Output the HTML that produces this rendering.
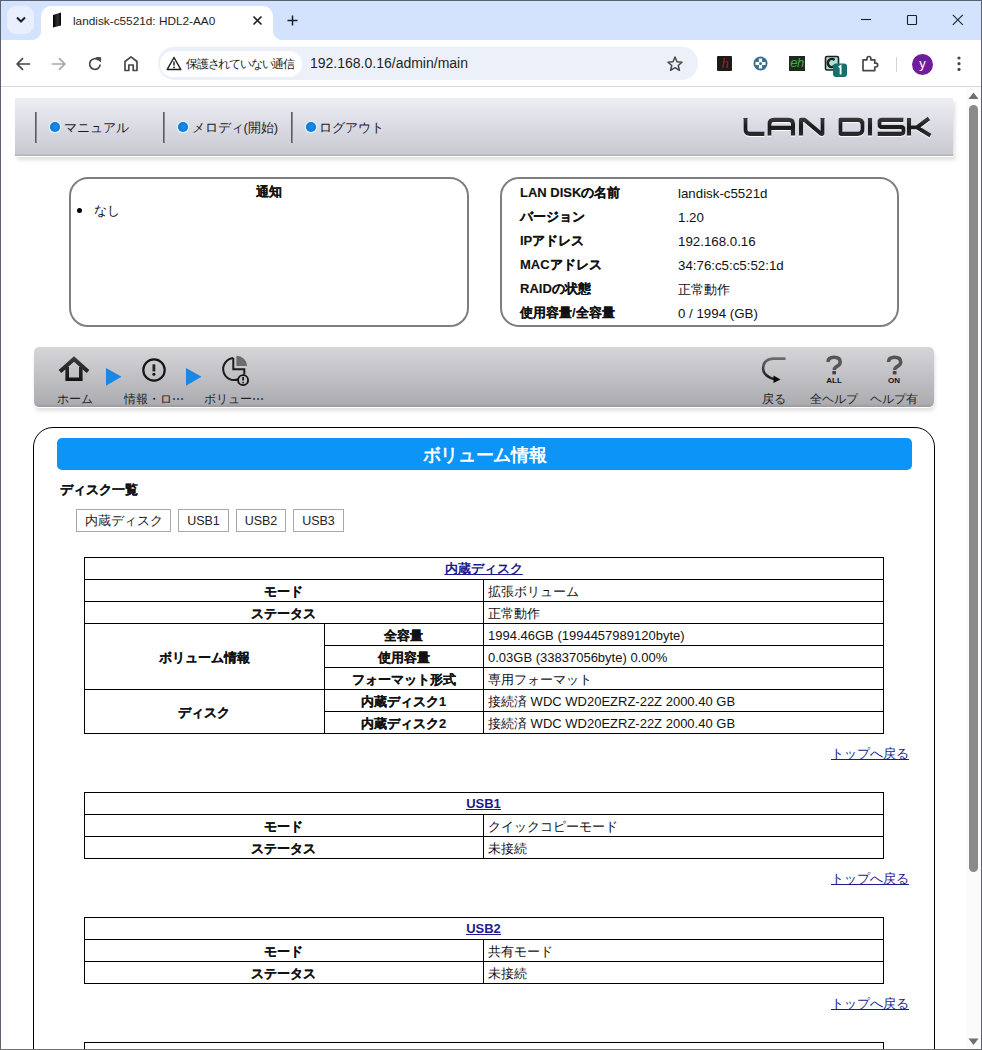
<!DOCTYPE html>
<html><head><meta charset="utf-8">
<style>
*{margin:0;padding:0;box-sizing:border-box}
html,body{width:982px;height:1050px;overflow:hidden;background:#fff;font-family:"Liberation Sans",sans-serif;color:#1f1f1f}
.a{position:absolute}
#win{position:absolute;left:0;top:0;width:982px;height:1050px;overflow:hidden}
.bd{position:absolute;background:#5b6170;z-index:100}
#tabs{position:absolute;left:0;top:0;width:982px;height:40px;background:#d3e3fd}
#toolbar{position:absolute;left:0;top:40px;width:982px;height:47px;background:#fff;border-bottom:1px solid #d9d9d9}
#page{position:absolute;left:0;top:0;width:982px;height:1050px;background:#fff;overflow:hidden;z-index:0}
#tabs,#toolbar{z-index:2}
.t13{font-size:13px;line-height:16px}
.sep{width:2px;height:31px;background:linear-gradient(90deg,#5c5c60 0,#5c5c60 50%,#8c8c90 50%)}
.dot{width:10px;height:10px;border-radius:50%;background:radial-gradient(circle at 55% 50%,#1a8ff0 0,#0a78d2 70%);box-shadow:0 0 0 1.5px #d2f3ff}
.hl{font-size:13px;line-height:16px;color:#1c1c1c;white-space:nowrap;letter-spacing:-0.1px}
.box{border:2px solid #7f7f7f;border-radius:19px}
.bold{-webkit-text-stroke:0.12px #111;font-size:13px;line-height:16px;font-weight:bold;color:#111;white-space:nowrap}
.t13{white-space:nowrap;color:#111}
.btn{height:23px;border:1px solid #a9a9a9;font-size:12.5px;line-height:22px;text-align:center;color:#222;white-space:nowrap}
.hl1{height:1px;background:#000}
.vl1{width:1px;background:#000}
.tb{-webkit-text-stroke:0.12px #111;font-size:13px;line-height:16px;font-weight:bold;text-align:center;color:#111;white-space:nowrap}
.tv{font-size:13px;line-height:16px;color:#111;white-space:nowrap}
.lk{font-size:13px;line-height:16px;color:#1b1b8c;white-space:nowrap;text-decoration:underline}
.lk u{font-weight:bold}
.ic8{font-size:8px;line-height:8px;font-weight:bold;text-align:center;color:#111;letter-spacing:0px}
.nl{font-size:12px;line-height:14px;color:#222;white-space:nowrap}
</style></head>
<body>
<div id="win">
 <div id="tabs">
  <div class="a" style="left:7px;top:6px;width:27px;height:28px;border-radius:9px;background:#e9effc"></div>
  <svg class="a" style="left:15px;top:16px" width="12" height="8" viewBox="0 0 12 8"><path d="M2 1.5 L6 5.5 L10 1.5" stroke="#1b1f2a" stroke-width="2" fill="none"/></svg>
  <div class="a" style="left:41px;top:6px;width:232px;height:40px;background:#fff;border-radius:10px 10px 0 0"></div>
  <div class="a" style="left:31px;top:30px;width:10px;height:10px;background:radial-gradient(circle at 0 0,#d3e3fd 10px,#fff 10.5px)"></div>
  <div class="a" style="left:273px;top:30px;width:10px;height:10px;background:radial-gradient(circle at 10px 0,#d3e3fd 10px,#fff 10.5px)"></div>
  <svg class="a" style="left:52px;top:12px" width="11" height="16" viewBox="0 0 11 16"><defs><linearGradient id="fg" x1="0" x2="1"><stop offset="0" stop-color="#000"/><stop offset="0.6" stop-color="#333"/><stop offset="1" stop-color="#000"/></linearGradient></defs><path d="M1 3 L9 0.5 L9 13.5 L1 15.5 Z" fill="url(#fg)"/></svg>
  <div class="a" style="left:73px;top:14px;font-size:11.8px;line-height:14px;color:#1f1f1f;white-space:nowrap">landisk-c5521d: HDL2-AA0</div>
  <svg class="a" style="left:252px;top:15px" width="11" height="11" viewBox="0 0 11 11"><path d="M1.5 1.5 L9.5 9.5 M9.5 1.5 L1.5 9.5" stroke="#1f1f1f" stroke-width="1.6"/></svg>
  <svg class="a" style="left:286px;top:14px" width="13" height="13" viewBox="0 0 13 13"><path d="M6.5 1.5 V11.5 M1.5 6.5 H11.5" stroke="#1b1f2a" stroke-width="1.5"/></svg>
  <svg class="a" style="left:861px;top:13px" width="12" height="12" viewBox="0 0 12 12"><path d="M0 6.5 H10" stroke="#1b1f2a" stroke-width="1.1"/></svg>
  <svg class="a" style="left:906px;top:14px" width="12" height="12" viewBox="0 0 12 12"><rect x="1.5" y="1.5" width="9" height="9" rx="0.8" stroke="#1b1f2a" stroke-width="1.1" fill="none"/></svg>
  <svg class="a" style="left:952px;top:14px" width="12" height="12" viewBox="0 0 12 12"><path d="M0.8 0.8 L10.8 10.8 M10.8 0.8 L0.8 10.8" stroke="#1b1f2a" stroke-width="1.1"/></svg>
 </div>
 <div id="toolbar">
  <svg class="a" style="left:15px;top:16px" width="16" height="16" viewBox="0 0 16 16"><path d="M15 8 H2.5 M8 2.2 L2.2 8 L8 13.8" stroke="#474747" stroke-width="1.7" fill="none"/></svg>
  <svg class="a" style="left:51px;top:16px" width="16" height="16" viewBox="0 0 16 16"><path d="M1 8 H13.5 M8 2.2 L13.8 8 L8 13.8" stroke="#a8a8a8" stroke-width="1.7" fill="none"/></svg>
  <svg class="a" style="left:87px;top:16px" width="16" height="16" viewBox="0 0 16 16"><path d="M13.2 8.5 A5.3 5.3 0 1 1 11.6 4.2" stroke="#474747" stroke-width="1.7" fill="none"/><path d="M9.3 1.6 H13.6 V5.9 Z" fill="#474747" stroke="#474747" stroke-width="1"/></svg>
  <svg class="a" style="left:123px;top:15px" width="16" height="17" viewBox="0 0 16 17"><path d="M2 15.5 V6.5 L8 1.8 L14 6.5 V15.5 H10.2 V10 H5.8 V15.5 Z" stroke="#474747" stroke-width="1.7" fill="none" stroke-linejoin="round"/></svg>
  <div class="a" style="left:158px;top:7px;width:540px;height:33px;border-radius:17px;background:#ecf1f9;box-shadow:0 -0.5px 0 #f2f5fa"></div>
  <div class="a" style="left:160px;top:11px;width:142px;height:26px;border-radius:13px;background:#fff"></div>
  <svg class="a" style="left:166px;top:16px" width="16" height="15" viewBox="0 0 16 15"><path d="M8 1.5 L14.8 13.5 H1.2 Z" stroke="#1f1f1f" stroke-width="1.5" fill="none" stroke-linejoin="round"/><path d="M8 5.5 V9.5" stroke="#1f1f1f" stroke-width="1.5"/><circle cx="8" cy="11.4" r="0.9" fill="#1f1f1f"/></svg>
  <div class="a" style="left:186px;top:16px;font-size:12px;line-height:16px;color:#1f1f1f;white-space:nowrap;letter-spacing:-1.2px">保護されていない通信</div>
  <div class="a" style="left:310px;top:15px;font-size:14px;line-height:17px;color:#1f1f1f;white-space:nowrap">192.168.0.16/admin/main</div>
  <svg class="a" style="left:667px;top:16px" width="16" height="15" viewBox="0 0 16 15"><path d="M8 1 L10 5.8 L15 6.2 L11.2 9.5 L12.4 14.3 L8 11.7 L3.6 14.3 L4.8 9.5 L1 6.2 L6 5.8 Z" stroke="#474747" stroke-width="1.5" fill="none" stroke-linejoin="round"/></svg>
  <div class="a" style="left:717px;top:16px;width:15px;height:15px;background:#1b1b1b;border-radius:1px"></div>
  <div class="a" style="left:719px;top:14px;width:12px;font-size:15px;line-height:18px;color:#a81a1a;font-style:italic;font-family:'Liberation Serif',serif;text-align:center">h</div>
  <svg class="a" style="left:753px;top:16px" width="15" height="15" viewBox="0 0 15 15"><circle cx="7.5" cy="7.5" r="7" fill="#3f6f8f"/><path d="M7.5 2.5 V12.5 M2.5 7.5 H12.5" stroke="#fff" stroke-width="3.2"/><circle cx="7.5" cy="7.5" r="1.5" fill="#3f6f8f"/></svg>
  <div class="a" style="left:789px;top:16px;width:16px;height:15px;background:#1f2a1f"></div>
  <div class="a" style="left:789px;top:15px;width:16px;font-size:13px;line-height:16px;color:#3fae3f;font-style:italic;text-align:center;letter-spacing:-0.5px">eh</div>
  <svg class="a" style="left:824px;top:15px" width="24" height="24" viewBox="0 0 24 24"><rect x="1.5" y="1.5" width="13" height="13.5" rx="1.5" fill="#a7e3d6" stroke="#1f1f1f" stroke-width="1.6"/><path d="M10.5 5 A4 4 0 1 0 10.5 11" stroke="#1f1f1f" stroke-width="2.5" fill="none"/><rect x="9" y="8.5" width="14" height="13.5" rx="3" fill="#17706e"/><path d="M14.7 12.2 L16.6 11 V19.5" stroke="#fff" stroke-width="1.8" fill="none"/></svg>
  <svg class="a" style="left:861px;top:15px" width="18" height="17" viewBox="0 0 18 17"><path d="M2 4.8 H6 V3.4 A1.9 1.9 0 0 1 9.8 3.4 V4.8 H13.8 V8.2 H14.8 A1.9 1.9 0 0 1 14.8 12 H13.8 V15.6 H2 Z" stroke="#474747" stroke-width="1.7" fill="none" stroke-linejoin="round"/></svg>
  <div class="a" style="left:896px;top:17px;width:1px;height:15px;background:#d5d5d5"></div>
  <div class="a" style="left:912px;top:14px;width:21px;height:21px;border-radius:50%;background:#6f1d9b"></div>
  <div class="a" style="left:912px;top:16px;width:21px;font-size:13px;line-height:15px;color:#fff;text-align:center">y</div>
  <svg class="a" style="left:956px;top:15px" width="6" height="18" viewBox="0 0 6 18"><circle cx="3" cy="3" r="1.6" fill="#474747"/><circle cx="3" cy="8.7" r="1.6" fill="#474747"/><circle cx="3" cy="14.4" r="1.6" fill="#474747"/></svg>
 </div>
 <div id="page">
  <!-- header bar -->
  <div class="a" style="left:15px;top:98px;width:938px;height:58px;background:linear-gradient(#f1f1f3 0px,#ececf3 2px,#c9c9d2 56px,#b3b3ba 57px,#b3b3ba 58px);box-shadow:0 1px 0 #fff,2px 4px 4px rgba(0,0,0,0.13)"></div>
  <div class="a sep" style="left:35px;top:112px"></div>
  <div class="a sep" style="left:163px;top:112px"></div>
  <div class="a sep" style="left:291px;top:112px"></div>
  <div class="a dot" style="left:50px;top:122px"></div>
  <div class="a hl" style="left:64px;top:120px">マニュアル</div>
  <div class="a dot" style="left:178px;top:122px"></div>
  <div class="a hl" style="left:192px;top:120px">メロディ(開始)</div>
  <div class="a dot" style="left:306px;top:122px"></div>
  <div class="a hl" style="left:319px;top:120px">ログアウト</div>
  <!-- info boxes -->
  <div class="a box" style="left:69px;top:177px;width:400px;height:150px"></div>
  <div class="a bold" style="left:69px;top:184px;width:400px;text-align:center">通知</div>
  <div class="a" style="left:77px;top:208px;width:5px;height:5px;border-radius:50%;background:#000"></div>
  <div class="a t13" style="left:94px;top:203px">なし</div>
  <div class="a box" style="left:500px;top:177px;width:399px;height:150px"></div>
  <div class="a bold" style="left:520px;top:185px">LAN DISKの名前</div>
  <div class="a bold" style="left:520px;top:209px">バージョン</div>
  <div class="a bold" style="left:520px;top:233px">IPアドレス</div>
  <div class="a bold" style="left:520px;top:257px">MACアドレス</div>
  <div class="a bold" style="left:520px;top:281px">RAIDの状態</div>
  <div class="a bold" style="left:520px;top:305px">使用容量/全容量</div>
  <div class="a t13" style="left:678px;top:186px;font-size:13.3px">landisk-c5521d</div>
  <div class="a t13" style="left:678px;top:210px;font-size:13.3px">1.20</div>
  <div class="a t13" style="left:678px;top:234px;font-size:13.3px">192.168.0.16</div>
  <div class="a t13" style="left:678px;top:258px;font-size:13.3px">34:76:c5:c5:52:1d</div>
  <div class="a t13" style="left:678px;top:282px;font-size:13.3px">正常動作</div>
  <div class="a t13" style="left:678px;top:306px;font-size:13.3px">0 / 1994 (GB)</div>
  <!-- nav bar -->
  <div class="a" style="left:34px;top:347px;width:900px;height:60px;border-radius:5px;background:linear-gradient(#d5d5da 0px,#d2d2d7 4px,#acacb1 57px,#9c9ca1 59px);box-shadow:0 1px 0 #fff,1px 4px 4px rgba(0,0,0,0.12)"></div>
  <!-- nav icons -->
  <svg class="a" style="left:34px;top:347px" width="900" height="60" viewBox="34 347 900 60">
   <defs><linearGradient id="ig" gradientUnits="userSpaceOnUse" x1="0" y1="356" x2="0" y2="382"><stop offset="0" stop-color="#3c3c3c"/><stop offset="1" stop-color="#111"/></linearGradient>
   <linearGradient id="bg2" gradientUnits="userSpaceOnUse" x1="0" y1="357" x2="0" y2="382"><stop offset="0" stop-color="#6f6f6f"/><stop offset="1" stop-color="#0c0c0c"/></linearGradient></defs>
   <path d="M60 371.5 L74 359 L88 371.5" stroke="url(#ig)" stroke-width="4" fill="none"/>
   <path d="M67.2 367 V379.3 H80.8 V367" stroke="url(#ig)" stroke-width="3.6" fill="none"/>
   <path d="M106 368 L121.5 376.8 L106 385.8 Z" fill="#1a86e6"/>
   <circle cx="154" cy="370" r="10.7" stroke="#161616" stroke-width="2.2" fill="none"/>
   <path d="M153.9 364.3 V371.4" stroke="#222" stroke-width="2.8"/>
   <circle cx="153.9" cy="374.3" r="1.5" fill="#111"/>
   <path d="M186 368 L201.5 376.8 L186 385.8 Z" fill="#1a86e6"/>
   <path d="M233.3 358.1 A11 11 0 1 0 238.2 379.3" stroke="#1c1c1c" stroke-width="2" fill="none"/>
   <path d="M233.3 358.1 V369.2 H244.3 V374.5" stroke="#1c1c1c" stroke-width="2" fill="none"/>
   <path d="M236.4 366 V355.7 A10.8 10.8 0 0 1 247.2 366 Z" fill="#6b6b6b"/>
   <circle cx="243.1" cy="380.2" r="5" stroke="#111" stroke-width="1.8" fill="none"/>
   <path d="M243.1 377 V380.6" stroke="#111" stroke-width="1.7"/>
   <circle cx="243.1" cy="382.6" r="0.9" fill="#111"/>
   <path d="M785.5 358.6 H773 Q763 359.5 763 368.5 Q763.5 376.5 775 379.3" stroke="url(#bg2)" stroke-width="2.6" fill="none"/>
   <path d="M773.5 375.4 L780.5 379.5 L773.5 383 Z" fill="#0c0c0c"/>
   <path d="M828 362 Q828.2 357.3 834 357.3 Q840.2 357.3 840.2 362 Q840.2 364.8 837 366.3 Q834.3 367.6 834.2 370" stroke="#555" stroke-width="3.5" fill="none"/>
   <rect x="832.3" y="371" width="3.7" height="3.4" fill="#444"/>
   <path d="M888.5 362 Q888.7 357.3 894.5 357.3 Q900.7 357.3 900.7 362 Q900.7 364.8 897.5 366.3 Q894.8 367.6 894.7 370" stroke="#555" stroke-width="3.5" fill="none"/>
   <rect x="892.8" y="371" width="3.7" height="3.4" fill="#444"/>
  </svg>
  <div class="a ic8" style="left:814px;top:377px;width:40px">ALL</div>
  <div class="a ic8" style="left:874px;top:377px;width:40px">ON</div>
  <div class="a nl" style="left:34.5px;top:392px;width:80px;text-align:center">ホーム</div>
  <div class="a nl" style="left:113.5px;top:392px;width:80px;text-align:center">情報・ロ⋯</div>
  <div class="a nl" style="left:194px;top:392px;width:80px;text-align:center">ボリュー⋯</div>
  <div class="a nl" style="left:734px;top:392px;width:80px;text-align:center">戻る</div>
  <div class="a nl" style="left:793.5px;top:392px;width:80px;text-align:center">全ヘルプ</div>
  <div class="a nl" style="left:854px;top:392px;width:80px;text-align:center">ヘルプ有</div>
  <!-- main box -->
  <div class="a" style="left:33px;top:427px;width:902px;height:700px;border:1px solid #000;border-radius:20px"></div>
  <div class="a" style="left:57px;top:438px;width:855px;height:32px;border-radius:5px;background:#0c95f6;color:#fff;font-size:17.5px;font-weight:bold;line-height:35px;text-align:center;letter-spacing:-0.3px">ボリューム情報</div>
  <div class="a bold" style="left:60px;top:482px">ディスク一覧</div>
  <div class="a btn" style="left:76px;top:509px;width:95px">内蔵ディスク</div>
  <div class="a btn" style="left:178px;top:509px;width:51px">USB1</div>
  <div class="a btn" style="left:236px;top:509px;width:50px">USB2</div>
  <div class="a btn" style="left:293px;top:509px;width:51px">USB3</div>
  <!-- scrollbar -->
  <div class="a" style="left:966px;top:87px;width:15px;height:962px;background:#fbfbfb"></div>
  <svg class="a" style="left:968px;top:92px" width="11" height="8" viewBox="0 0 11 8"><path d="M5.5 0.5 L10.5 7 H0.5 Z" fill="#6e6e6e"/></svg>
  <div class="a" style="left:969px;top:105px;width:9px;height:767px;border-radius:4.5px;background:#8a8a8a"></div>
  <svg class="a" style="left:968px;top:1038px" width="11" height="8" viewBox="0 0 11 8"><path d="M0.5 0.5 H10.5 L5.5 7 Z" fill="#6e6e6e"/></svg>
  <!-- logo -->
  <svg class="a" style="left:740px;top:114px" width="194" height="26" viewBox="0 0 194 26">
   <defs><linearGradient id="lg" gradientUnits="userSpaceOnUse" x1="0" y1="4" x2="0" y2="22"><stop offset="0" stop-color="#3a3a3e"/><stop offset="0.5" stop-color="#1a1a1c"/><stop offset="1" stop-color="#2e2e32"/></linearGradient>
   <filter id="ls" x="-5%" y="-20%" width="110%" height="140%"><feDropShadow dx="0" dy="1" stdDeviation="0.6" flood-color="#fff" flood-opacity="0.9"/></filter></defs>
   <g fill="none" stroke="url(#lg)" stroke-width="4.2" stroke-linejoin="round" filter="url(#ls)">
    <path d="M5.5 4 V15.5 Q5.5 19.8 9.5 19.8 H24.5"/>
    <path d="M29.5 21.7 V10 Q29.5 5.9 34 5.9 H48.5 Q53 5.9 53 10 V21.7 M29.5 13.8 H53"/>
    <path d="M61 21.7 V5.9 H64.5 L81 19.8 H82.5 V4"/>
    <path d="M100.5 5.9 H118 Q122.5 5.9 122.5 10.5 V15.2 Q122.5 19.8 118 19.8 H100.5 Z"/>
    <path d="M130 4 V21.7"/>
    <path d="M163.5 5.9 H142 Q139.5 5.9 139.5 8.8 V10.6 Q139.5 13.2 142 13.2 H161 Q163.5 13.2 163.5 15.8 V17 Q163.5 19.8 161 19.8 H137.5"/>
    <path d="M169 4 V21.7 M170 13.5 H177 L189 4.5 M177 13.5 L190.5 21.7"/>
   </g>
  </svg>
  <!--TABLES-->
  <div class="a" style="left:84px;top:557px;width:800px;height:177px;border:1px solid #000"></div>
  <div class="a hl1" style="left:84px;top:579px;width:799px"></div>
  <div class="a hl1" style="left:84px;top:601px;width:799px"></div>
  <div class="a hl1" style="left:84px;top:623px;width:799px"></div>
  <div class="a hl1" style="left:324px;top:645px;width:559px"></div>
  <div class="a hl1" style="left:324px;top:667px;width:559px"></div>
  <div class="a hl1" style="left:84px;top:689px;width:799px"></div>
  <div class="a hl1" style="left:324px;top:711px;width:559px"></div>
  <div class="a lk" style="left:84px;top:561px;width:799px;text-align:center"><u>内蔵ディスク</u></div>
  <div class="a tb" style="left:84px;top:584px;width:399px">モード</div>
  <div class="a tv" style="left:488px;top:584px">拡張ボリューム</div>
  <div class="a tb" style="left:84px;top:606px;width:399px">ステータス</div>
  <div class="a tv" style="left:488px;top:606px">正常動作</div>
  <div class="a tb" style="left:84px;top:650px;width:240px">ボリューム情報</div>
  <div class="a tb" style="left:324px;top:628px;width:159px">全容量</div>
  <div class="a tv" style="left:488px;top:628px">1994.46GB (1994457989120byte)</div>
  <div class="a tb" style="left:324px;top:650px;width:159px">使用容量</div>
  <div class="a tv" style="left:488px;top:650px">0.03GB (33837056byte) 0.00%</div>
  <div class="a tb" style="left:324px;top:672px;width:159px">フォーマット形式</div>
  <div class="a tv" style="left:488px;top:672px">専用フォーマット</div>
  <div class="a tb" style="left:84px;top:705px;width:240px">ディスク</div>
  <div class="a tb" style="left:324px;top:694px;width:159px">内蔵ディスク1</div>
  <div class="a tv" style="left:488px;top:694px">接続済 WDC WD20EZRZ-22Z 2000.40 GB</div>
  <div class="a tb" style="left:324px;top:716px;width:159px">内蔵ディスク2</div>
  <div class="a tv" style="left:488px;top:716px">接続済 WDC WD20EZRZ-22Z 2000.40 GB</div>
  <div class="a vl1" style="left:483px;top:579px;height:154px"></div>
  <div class="a vl1" style="left:324px;top:623px;height:110px"></div>
  <div class="a lk" style="left:759px;top:746px;width:150px;text-align:right">トップへ戻る</div>
  <div class="a" style="left:84px;top:792px;width:800px;height:67px;border:1px solid #000"></div>
  <div class="a hl1" style="left:84px;top:814px;width:799px"></div>
  <div class="a hl1" style="left:84px;top:836px;width:799px"></div>
  <div class="a lk" style="left:84px;top:796px;width:799px;text-align:center"><u>USB1</u></div>
  <div class="a tb" style="left:84px;top:819px;width:399px">モード</div>
  <div class="a tv" style="left:488px;top:819px">クイックコピーモード</div>
  <div class="a tb" style="left:84px;top:841px;width:399px">ステータス</div>
  <div class="a tv" style="left:488px;top:841px">未接続</div>
  <div class="a vl1" style="left:483px;top:814px;height:44px"></div>
  <div class="a lk" style="left:759px;top:871px;width:150px;text-align:right">トップへ戻る</div>
  <div class="a" style="left:84px;top:917px;width:800px;height:67px;border:1px solid #000"></div>
  <div class="a hl1" style="left:84px;top:939px;width:799px"></div>
  <div class="a hl1" style="left:84px;top:961px;width:799px"></div>
  <div class="a lk" style="left:84px;top:921px;width:799px;text-align:center"><u>USB2</u></div>
  <div class="a tb" style="left:84px;top:944px;width:399px">モード</div>
  <div class="a tv" style="left:488px;top:944px">共有モード</div>
  <div class="a tb" style="left:84px;top:966px;width:399px">ステータス</div>
  <div class="a tv" style="left:488px;top:966px">未接続</div>
  <div class="a vl1" style="left:483px;top:939px;height:44px"></div>
  <div class="a lk" style="left:759px;top:996px;width:150px;text-align:right">トップへ戻る</div>
  <div class="a" style="left:84px;top:1042px;width:800px;height:30px;border:1px solid #000"></div>
  <!--/TABLES-->
 </div>
 <div class="bd" style="left:0;top:0;width:982px;height:1px"></div>
 <div class="bd" style="left:0;top:0;width:1px;height:1050px"></div>
 <div class="bd" style="left:981px;top:0;width:1px;height:1050px"></div>
 <div class="bd" style="left:0;top:1049px;width:982px;height:1px;background:#707070"></div>
</div>
</body></html>
